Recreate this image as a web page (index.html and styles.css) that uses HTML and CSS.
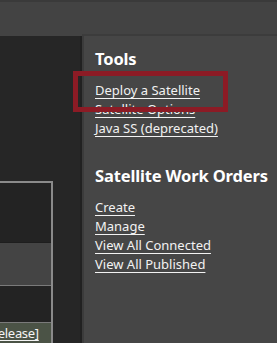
FILE: index.html
```html
<!DOCTYPE html>
<html>
<head>
<meta charset="utf-8">
<link rel="stylesheet" href="styles.css">
</head>
<body>
<div class="page">
  <div class="topbar"></div>
  <div class="main">
    <div class="side">
      <div class="grid">
        <div class="row r1"></div>
        <div class="row r2"></div>
        <div class="row r3"></div>
        <div class="row r4"><a class="rel" href="#">[Release]</a></div>
      </div>
    </div>
    <div class="content">
      <h2 class="heading">Tools</h2>
      <ul class="links">
        <li><a href="#">Deploy a Satellite</a></li>
        <li><a href="#">Satellite Options</a></li>
        <li><a href="#">Java SS (deprecated)</a></li>
      </ul>
      <h2 class="heading second">Satellite Work Orders</h2>
      <ul class="links">
        <li><a href="#">Create</a></li>
        <li><a href="#">Manage</a></li>
        <li><a href="#">View All Connected</a></li>
        <li><a href="#">View All Published</a></li>
      </ul>
    </div>
  </div>
  <div class="highlight"></div>
</div>
</body>
</html>
```
FILE: styles.css
```css
html, body {
  margin: 0;
  padding: 0;
  background: #262626;
  overflow: hidden;
}
.page {
  position: relative;
  width: 277px;
  height: 343px;
  overflow: hidden;
  font-family: "Noto Sans", "Open Sans", sans-serif;
  display: flex;
  flex-direction: column;
}
.topbar {
  height: 34px;
  flex: none;
  background: #434343;
  border-top: 2px solid #3a3a3a;
}
.main {
  flex: 1;
  display: flex;
  min-height: 0;
}
.side {
  width: 80px;
  flex: none;
  background: #262626;
  border-right: 2px solid #212121;
  padding-top: 145px;
}
.grid {
  width: 53px;
  border-top: 2px solid #8a8a8a;
  border-right: 2px solid #8a8a8a;
  box-sizing: border-box;
}
.row { width: 100%; }
.r1 { height: 59px; background: #232323; }
.r2 { height: 42px; background: #444444; border-top: 1px solid #1e1e1e; }
.r3 { height: 36px; background: #232323; border-top: 1px solid #7a7a7a; }
.r4 { height: 24px; background: #4b5346; border-top: 1px solid #7a7a7a; overflow: hidden; white-space: nowrap; line-height: 19px; }
.rel {
  display: inline-block;
  margin-left: -14px;
  color: #f4f4f4;
  font-size: 13px;
  letter-spacing: -0.3px;
  text-decoration: underline;
  text-underline-offset: 2px;
}
.content {
  flex: 1;
  background: #464646;
  border-left: 2px solid #3b3b3b;
  border-top: 2px solid #3c3c3c;
  margin-top: -2px;
  padding: 13px 0 0 11px;
  color: #f2f2f2;
}
.heading {
  margin: 0 0 12px 0;
  font-size: 16.5px;
  line-height: 20px;
  font-weight: bold;
  letter-spacing: -0.15px;
  color: #ffffff;
  white-space: nowrap;
}
.second { margin-top: 28px; }
.links {
  list-style: none;
  margin: 0;
  padding: 0;
}
.links li {
  line-height: 19px;
  font-size: 13px;
  white-space: nowrap;
}
.links a {
  color: #f2f2f2;
  text-decoration: underline;
  text-underline-offset: 3px;
}
.highlight {
  position: absolute;
  left: 73px;
  top: 71px;
  width: 145px;
  height: 31px;
  border: 5px solid #8c1b25;
}
```
